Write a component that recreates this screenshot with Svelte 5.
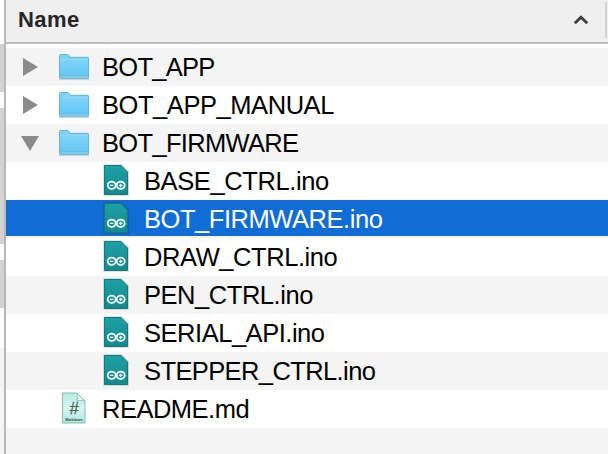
<script>
  const rows = [
    { name: 'BOT_APP', kind: 'folder', state: 'closed', ls: -0.73 },
    { name: 'BOT_APP_MANUAL', kind: 'folder', state: 'closed', ls: -0.44 },
    { name: 'BOT_FIRMWARE', kind: 'folder', state: 'open', ls: -0.67 },
    { name: 'BASE_CTRL.ino', kind: 'ino', ls: -0.4 },
    { name: 'BOT_FIRMWARE.ino', kind: 'ino', selected: true, ls: -0.45 },
    { name: 'DRAW_CTRL.ino', kind: 'ino', ls: -0.42 },
    { name: 'PEN_CTRL.ino', kind: 'ino', ls: -0.45 },
    { name: 'SERIAL_API.ino', kind: 'ino', ls: -0.47 },
    { name: 'STEPPER_CTRL.ino', kind: 'ino', ls: -0.6 },
    { name: 'README.md', kind: 'md', ls: -0.5 }
  ];
</script>

<svg class="defs" width="0" height="0" aria-hidden="true">
  <defs>
    <linearGradient id="folder-face" x1="0" y1="0" x2="0" y2="1">
      <stop offset="0" stop-color="#7fd4fa" />
      <stop offset="1" stop-color="#66c7f3" />
    </linearGradient>
    <linearGradient id="sketch-face" x1="0" y1="0" x2="0" y2="1">
      <stop offset="0" stop-color="#1ba1a6" />
      <stop offset="1" stop-color="#15898d" />
    </linearGradient>
    <linearGradient id="md-face" x1="0" y1="0" x2="0" y2="1">
      <stop offset="0" stop-color="#b0eee2" />
      <stop offset="0.5" stop-color="#d5f7f1" />
      <stop offset="1" stop-color="#a9e8df" />
    </linearGradient>
  </defs>
</svg>

<div class="finder">
  <div class="gutter"><i class="mid"></i><i class="gap"></i><i class="long"></i><i class="gap"></i><i class="mid"></i></div>
  <div class="pane">
    <header>
      <span>Name</span>
      <svg class="sort" width="16" height="10" viewBox="0 0 16 10"><path d="M1.8 8.3 8 2.3 14.2 8.3" fill="none" stroke="#3c3c3c" stroke-width="2.8" /></svg>
      <b></b>
    </header>
    <ul>
      {#each rows as row}
        <li class={row.kind} class:selected={row.selected}>
          <span class="disclosure">
            {#if row.state === 'closed'}
              <svg width="18" height="18" viewBox="0 0 18 18"><path d="M2 0 17 9 2 18Z" fill="#8b8b8b" /></svg>
            {:else if row.state === 'open'}
              <svg width="18" height="18" viewBox="0 0 18 18"><path d="M0 2H18L9 17Z" fill="#8b8b8b" /></svg>
            {/if}
          </span>
          <span class="icon">
            {#if row.kind === 'folder'}
              <svg width="32" height="28" viewBox="0 0 32 28">
                <path d="M1 26H31" stroke="#000" stroke-opacity=".25" stroke-width="1.2" />
                <path d="M1.5 24.5V2.5Q1.5 1.5 2.5 1.5H9.5Q10.5 1.5 11 2.5L12 4.3H29.5Q30.5 4.3 30.5 5.3V24.5Q30.5 25.3 29.5 25.3H2.5Q1.5 25.3 1.5 24.5Z" fill="#82d1f3" stroke="#5fb6dd" />
                <path d="M2 6.5H30V22.5H2Z" fill="url(#folder-face)" />
                <path d="M2 6.5H30" stroke="#8fdafa" />
                <path d="M2 22.7H30" stroke="#60bae3" />
              </svg>
            {:else if row.kind === 'ino'}
              <svg width="26" height="32" viewBox="0 0 26 32">
                <path d="M1 1H18.3L25.2 7.8V31H1Z" fill="none" stroke="#000" stroke-opacity=".15" stroke-width="1.6" />
                <path d="M1.5 1.5H18L24.5 8V30.5H1.5Z" fill="url(#sketch-face)" stroke="#14797e" />
                <ellipse cx="8.7" cy="21.3" rx="4" ry="3.6" fill="none" stroke="#fff" stroke-width="1.7" />
                <ellipse cx="17.7" cy="21.3" rx="4" ry="3.6" fill="none" stroke="#fff" stroke-width="1.7" />
                <path d="M7 21.4H10.4M16 21.4H19.4M17.7 19.7V23.1" stroke="#fff" stroke-width="1.2" />
              </svg>
            {:else}
              <svg width="26" height="32" viewBox="0 0 26 32">
                <path d="M1.5 1H16L24 9V31H1.5Z" fill="url(#md-face)" stroke="#93b6b1" stroke-width="1" />
                <path d="M16 1Q17 6.5 16 9Q20 7.5 24 9.5Z" fill="#e7fffa" stroke="#82b9b0" stroke-width=".8" />
                <text x="13" y="22" text-anchor="middle" font-size="17" font-style="italic" fill="#575d5c" stroke="#575d5c" stroke-width=".3">#</text>
                <text x="4.2" y="28.8" font-size="4.3" textLength="17.5" lengthAdjust="spacingAndGlyphs" font-weight="700" fill="#394745">Markdown</text>
              </svg>
            {/if}
          </span>
          <span class="name" style="letter-spacing: {row.ls}px">{row.name}</span>
        </li>
      {/each}
    </ul>
  </div>
</div>

<style>
  :global(body) { margin: 0; overflow: hidden; }
  .defs { position: absolute; }
  .finder {
    display: flex;
    width: 608px;
    height: 454px;
    overflow: hidden;
    background: #f4f4f4;
    font-family: "Liberation Sans", Arial, sans-serif;
    color: #000;
  }
  .gutter {
    width: 4px;
    height: 348px;
    box-sizing: border-box;
    padding-top: 44px;
    background: #fff;
    flex: none;
  }
  .gutter i { display: block; height: 48px; background: #d3d3d3; }
  .gutter .gap { height: 16px; background: #fff; }
  .gutter .long { height: 136px; }
  .pane { flex: 1; border-left: 2px solid #b7b7b7; }
  header {
    display: flex;
    align-items: center;
    box-sizing: border-box;
    height: 44px;
    padding: 0 1px 2px 12px;
    border-bottom: 2px solid #bdbdbd;
    background: #efefef;
    color: #262626;
    font-size: 22px;
    font-weight: 700;
    letter-spacing: 0.4px;
  }
  .sort { margin-left: auto; margin-right: 16px; }
  header b { width: 2px; height: 36px; background: #d4d4d4; }
  ul { margin: 0; padding: 4px 0 0; list-style: none; background: #fff; }
  li { display: flex; align-items: center; height: 38px; background: #fff; }
  li:nth-child(odd) { background: #f4f4f4; }
  li.selected { background: linear-gradient(#116cd6 36px, #f4f4f4 36px); color: #fff; }
  .disclosure { width: 18px; height: 18px; margin-left: 15px; }
  .disclosure svg, .icon svg { display: block; }
  .icon { width: 32px; margin-left: 19px; }
  .md .icon { padding-left: 3px; width: 29px; margin-bottom: 3px; }
  .ino .icon { margin-left: 64px; width: 26px; margin-bottom: 2px; }
  .name { margin-left: 12px; font-size: 25.5px; line-height: 38px; white-space: nowrap; }
  .ino .name { margin-left: 15px; }
</style>
